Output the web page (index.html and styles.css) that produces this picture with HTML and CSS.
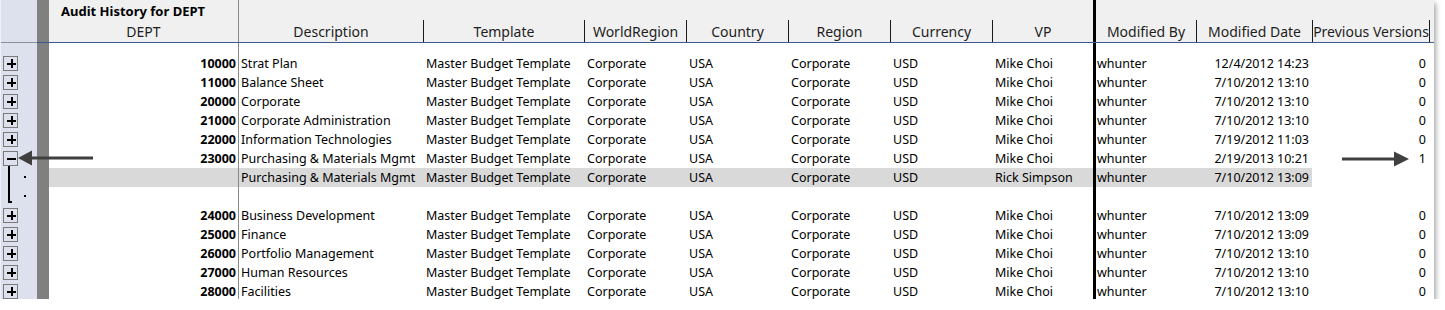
FILE: index.html
```html
<!DOCTYPE html>
<html>
<head>
<meta charset="utf-8">
<link rel="stylesheet" href="styles.css">
</head>
<body>
<div class="panel">
  <div class="gutter">
    <div class="ghead"></div>
    <div class="gbody">
      <div class="grow"><span class="box plus"></span></div>
      <div class="grow"><span class="box plus"></span></div>
      <div class="grow"><span class="box plus"></span></div>
      <div class="grow"><span class="box plus"></span></div>
      <div class="grow"><span class="box plus"></span></div>
      <div class="grow"><span class="box minus"></span></div>
      <div class="gsub">
        <span class="bracket"></span>
        <span class="dots"><i></i><i></i></span>
      </div>
      <div class="grow"><span class="box plus"></span></div>
      <div class="grow"><span class="box plus"></span></div>
      <div class="grow"><span class="box plus"></span></div>
      <div class="grow"><span class="box plus"></span></div>
      <div class="grow"><span class="box plus"></span></div>
    </div>
  </div>
  <div class="band"></div>
  <div class="grid">
    <div class="sep sep-dept"></div>
    <div class="sep sep-thick"></div>

    <div class="h h-dept"><div class="title">Audit History for DEPT</div><div class="lbl nob">DEPT</div></div>
    <div class="h"><div class="lbl nob">Description</div></div>
    <div class="h"><div class="lbl">Template</div></div>
    <div class="h"><div class="lbl">WorldRegion</div></div>
    <div class="h"><div class="lbl">Country</div></div>
    <div class="h"><div class="lbl">Region</div></div>
    <div class="h"><div class="lbl">Currency</div></div>
    <div class="h"><div class="lbl">VP</div></div>
    <div class="h"><div class="lbl nob">Modified By</div></div>
    <div class="h"><div class="lbl">Modified Date</div></div>
    <div class="h"><div class="lbl last">Previous Versions</div></div>
    <div class="h"></div>

    <div class="rule"></div>
    <div class="gap"></div>

    <div class="row"><div class="c num">10000</div><div class="c d">Strat Plan</div><div class="c t">Master Budget Template</div><div class="c t">Corporate</div><div class="c t">USA</div><div class="c t">Corporate</div><div class="c t">USD</div><div class="c t">Mike Choi</div><div class="c mb">whunter</div><div class="c dt">12/4/2012 14:23</div><div class="c pv">0</div><div class="c"></div></div>
    <div class="row"><div class="c num">11000</div><div class="c d">Balance Sheet</div><div class="c t">Master Budget Template</div><div class="c t">Corporate</div><div class="c t">USA</div><div class="c t">Corporate</div><div class="c t">USD</div><div class="c t">Mike Choi</div><div class="c mb">whunter</div><div class="c dt">7/10/2012 13:10</div><div class="c pv">0</div><div class="c"></div></div>
    <div class="row"><div class="c num">20000</div><div class="c d">Corporate</div><div class="c t">Master Budget Template</div><div class="c t">Corporate</div><div class="c t">USA</div><div class="c t">Corporate</div><div class="c t">USD</div><div class="c t">Mike Choi</div><div class="c mb">whunter</div><div class="c dt">7/10/2012 13:10</div><div class="c pv">0</div><div class="c"></div></div>
    <div class="row"><div class="c num">21000</div><div class="c d">Corporate Administration</div><div class="c t">Master Budget Template</div><div class="c t">Corporate</div><div class="c t">USA</div><div class="c t">Corporate</div><div class="c t">USD</div><div class="c t">Mike Choi</div><div class="c mb">whunter</div><div class="c dt">7/10/2012 13:10</div><div class="c pv">0</div><div class="c"></div></div>
    <div class="row"><div class="c num">22000</div><div class="c d">Information Technologies</div><div class="c t">Master Budget Template</div><div class="c t">Corporate</div><div class="c t">USA</div><div class="c t">Corporate</div><div class="c t">USD</div><div class="c t">Mike Choi</div><div class="c mb">whunter</div><div class="c dt">7/19/2012 11:03</div><div class="c pv">0</div><div class="c"></div></div>
    <div class="row"><div class="c num">23000</div><div class="c d">Purchasing &amp; Materials Mgmt</div><div class="c t">Master Budget Template</div><div class="c t">Corporate</div><div class="c t">USA</div><div class="c t">Corporate</div><div class="c t">USD</div><div class="c t">Mike Choi</div><div class="c mb">whunter</div><div class="c dt">2/19/2013 10:21</div><div class="c pv">1</div><div class="c"></div></div>
    <div class="row hl"><div class="c num"></div><div class="c d">Purchasing &amp; Materials Mgmt</div><div class="c t">Master Budget Template</div><div class="c t">Corporate</div><div class="c t">USA</div><div class="c t">Corporate</div><div class="c t">USD</div><div class="c t">Rick Simpson</div><div class="c mb">whunter</div><div class="c dt">7/10/2012 13:09</div><div class="c pv nohl"></div><div class="c nohl"></div></div>
    <div class="row"><div class="c"></div><div class="c"></div><div class="c"></div><div class="c"></div><div class="c"></div><div class="c"></div><div class="c"></div><div class="c"></div><div class="c"></div><div class="c"></div><div class="c"></div><div class="c"></div></div>
    <div class="row"><div class="c num">24000</div><div class="c d">Business Development</div><div class="c t">Master Budget Template</div><div class="c t">Corporate</div><div class="c t">USA</div><div class="c t">Corporate</div><div class="c t">USD</div><div class="c t">Mike Choi</div><div class="c mb">whunter</div><div class="c dt">7/10/2012 13:09</div><div class="c pv">0</div><div class="c"></div></div>
    <div class="row"><div class="c num">25000</div><div class="c d">Finance</div><div class="c t">Master Budget Template</div><div class="c t">Corporate</div><div class="c t">USA</div><div class="c t">Corporate</div><div class="c t">USD</div><div class="c t">Mike Choi</div><div class="c mb">whunter</div><div class="c dt">7/10/2012 13:09</div><div class="c pv">0</div><div class="c"></div></div>
    <div class="row"><div class="c num">26000</div><div class="c d">Portfolio Management</div><div class="c t">Master Budget Template</div><div class="c t">Corporate</div><div class="c t">USA</div><div class="c t">Corporate</div><div class="c t">USD</div><div class="c t">Mike Choi</div><div class="c mb">whunter</div><div class="c dt">7/10/2012 13:10</div><div class="c pv">0</div><div class="c"></div></div>
    <div class="row"><div class="c num">27000</div><div class="c d">Human Resources</div><div class="c t">Master Budget Template</div><div class="c t">Corporate</div><div class="c t">USA</div><div class="c t">Corporate</div><div class="c t">USD</div><div class="c t">Mike Choi</div><div class="c mb">whunter</div><div class="c dt">7/10/2012 13:10</div><div class="c pv">0</div><div class="c"></div></div>
    <div class="row"><div class="c num">28000</div><div class="c d">Facilities</div><div class="c t">Master Budget Template</div><div class="c t">Corporate</div><div class="c t">USA</div><div class="c t">Corporate</div><div class="c t">USD</div><div class="c t">Mike Choi</div><div class="c mb">whunter</div><div class="c dt">7/10/2012 13:10</div><div class="c pv">0</div><div class="c"></div></div>
  </div>

  <svg class="arrow arrow-left" width="78" height="18" viewBox="0 0 78 18">
    <polygon points="1,9 15,1.5 15,16.5" fill="#404040"/>
    <rect x="14" y="7.5" width="62" height="3" fill="#404040"/>
  </svg>
  <svg class="arrow arrow-right" width="68" height="18" viewBox="0 0 68 18">
    <rect x="0" y="7.5" width="53" height="3" fill="#404040"/>
    <polygon points="67,9 52,1.5 52,16.5" fill="#404040"/>
  </svg>
</div>
</body>
</html>
```
FILE: styles.css
```css
html, body {
  margin: 0;
  padding: 0;
  background: #ffffff;
}

.panel {
  position: relative;
  display: flex;
  width: 1434px;
  height: 299px;
  overflow: hidden;
  background: #ffffff;
  box-shadow: 2px 3px 5px rgba(0, 0, 0, 0.35);
  font-family: "Noto Sans", "Open Sans", sans-serif;
  font-size: 12.5px;
  color: #000;
}

/* left outline gutter */
.gutter {
  width: 37px;
  flex: none;
  background: #dde1ed;
  border-left: 1px solid #eef0f6;
  box-sizing: border-box;
}
.ghead {
  height: 42px;
  border-bottom: 1px solid #8c8f99;
}
.gbody {
  padding-top: 11px;
  display: flex;
  flex-direction: column;
}
.grow {
  height: 19px;
  display: flex;
  align-items: center;
  padding-left: 2px;
}
.box {
  position: relative;
  width: 15px;
  height: 15px;
  box-sizing: border-box;
  border: 1px solid #7a7a7a;
}
.box::before {
  content: "";
  position: absolute;
  left: 3px;
  top: 5.5px;
  width: 9px;
  height: 2px;
  background: #000;
}
.plus::after {
  content: "";
  position: absolute;
  left: 6.5px;
  top: 2px;
  width: 2px;
  height: 9px;
  background: #000;
}
.gsub {
  height: 38px;
  display: flex;
}
.bracket {
  margin-left: 7px;
  margin-top: -3px;
  width: 4px;
  height: 38px;
  border-left: 2px solid #000;
  border-bottom: 2px solid #000;
  box-sizing: border-box;
}
.dots {
  margin-left: 12px;
  display: flex;
  flex-direction: column;
  gap: 17px;
  padding-top: 8px;
}
.dots i {
  display: block;
  width: 2px;
  height: 2px;
  background: #000;
}

/* dark band */
.band {
  width: 12px;
  flex: none;
  background: linear-gradient(#808080 0 42px, #3a5a8c 42px 43px, #808080 43px);
}

/* table grid */
.grid {
  flex: 1;
  display: grid;
  grid-template-columns: 189px 1px 184px 161px 102px 102px 102px 102px 101px 3px 100px 116px 118px 1fr;
  grid-template-rows: 42px 1px 11px repeat(13, 19px);
}
.sep {
  grid-row: 1 / -1;
}
.sep-dept {
  grid-column: 2;
  background: #8a8a8a;
}
.sep-thick {
  grid-column: 10;
  background: #000;
}
.rule {
  grid-row: 2;
  grid-column: 1 / -1;
  background: #3a5a8c;
}
.gap {
  grid-row: 3;
  grid-column: 1 / -1;
}

.h {
  background: #f0f0f0;
  display: flex;
  flex-direction: column;
  justify-content: flex-end;
  min-width: 0;
}
.title {
  height: 20px;
  line-height: 22px;
  padding-left: 12px;
  font-weight: bold;
  font-size: 13px;
  color: #000;
}
.h-dept {
  justify-content: space-between;
}
.lbl {
  height: 22px;
  line-height: 23px;
  border-left: 1px solid #1a1a1a;
  text-align: center;
  font-size: 14px;
  color: #1e1e1e;
  white-space: nowrap;
  overflow: hidden;
}
.lbl.nob {
  border-left: none;
}
.lbl.last {
  border-right: 1px solid #1a1a1a;
}

.row {
  display: contents;
}
.c {
  line-height: 19px;
  white-space: nowrap;
  overflow: hidden;
  min-width: 0;
}
.num {
  text-align: right;
  font-weight: bold;
  padding-right: 2px;
}
.d {
  padding-left: 2px;
}
.t {
  padding-left: 3px;
}
.mb {
  padding-left: 1px;
}
.dt {
  text-align: right;
  padding-right: 3px;
}
.pv {
  text-align: right;
  padding-right: 4px;
}
.row.hl .c {
  background: #d9d9d9;
}
.row.hl .c.nohl {
  background: transparent;
}

/* callout arrows */
.arrow {
  position: absolute;
}
.arrow-left {
  left: 17px;
  top: 149px;
}
.arrow-right {
  left: 1342px;
  top: 150px;
}
```
